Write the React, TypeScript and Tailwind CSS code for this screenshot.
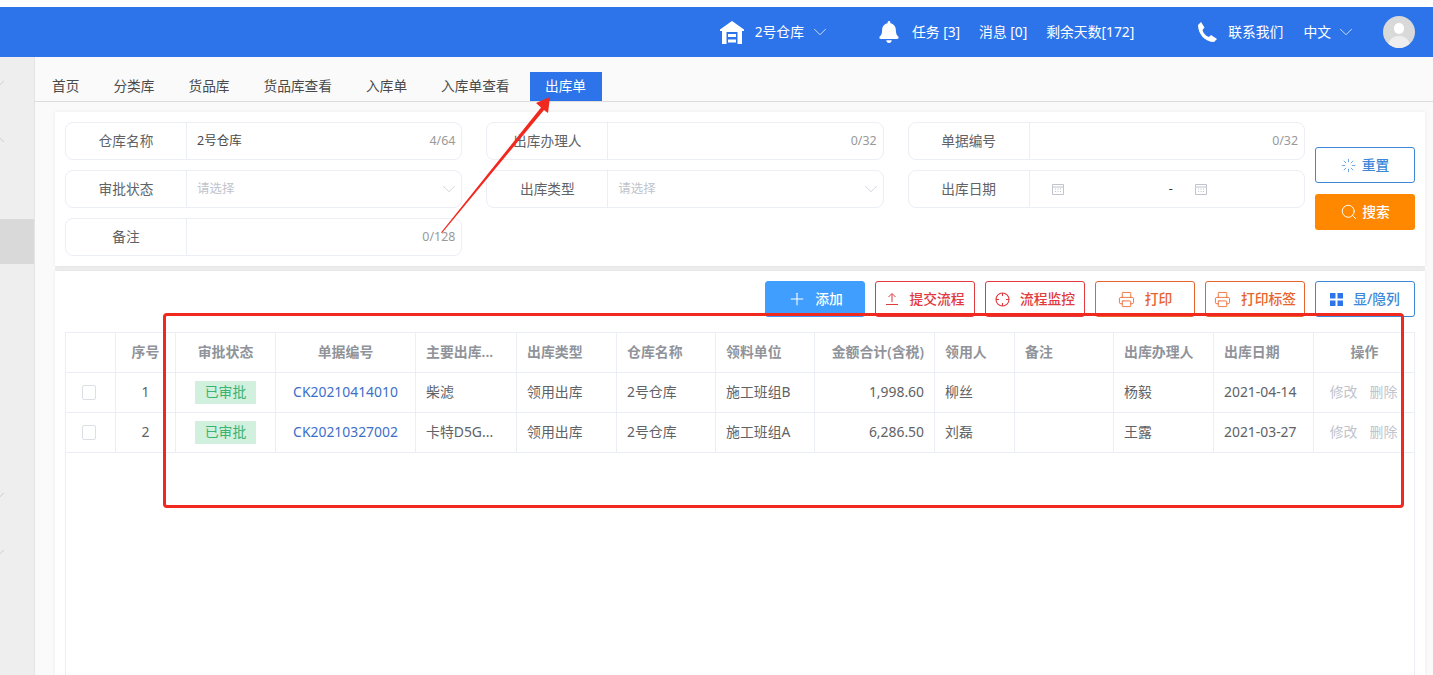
import type { ReactNode } from 'react'
import { ChevronDown, Plus, Printer, Search, Loader } from 'lucide-react'
import { FaBell } from 'react-icons/fa'

const COLS = 'grid grid-cols-[50px_60px_100px_140px_101px_100px_99px_99px_120px_80px_99px_100px_100px_101px]'

const TABS = ['首页', '分类库', '货品库', '货品库查看', '入库单', '入库单查看']

const HEADERS = [
  { label: '', cls: '' },
  { label: '序号', cls: 'justify-center' },
  { label: '审批状态', cls: 'justify-center' },
  { label: '单据编号', cls: 'justify-center' },
  { label: '主要出库...', cls: '' },
  { label: '出库类型', cls: '' },
  { label: '仓库名称', cls: '' },
  { label: '领料单位', cls: '' },
  { label: '金额合计(含税)', cls: 'justify-end' },
  { label: '领用人', cls: '' },
  { label: '备注', cls: '' },
  { label: '出库办理人', cls: '' },
  { label: '出库日期', cls: '' },
  { label: '操作', cls: 'justify-center' },
]

const ROWS = [
  { n: 1, code: 'CK20210414010', main: '柴滤', unit: '施工班组B', amount: '1,998.60', user: '柳丝', handler: '杨毅', date: '2021-04-14' },
  { n: 2, code: 'CK20210327002', main: '卡特D5G...', unit: '施工班组A', amount: '6,286.50', user: '刘磊', handler: '王露', date: '2021-03-27' },
]

function Warehouse() {
  return (
    <svg width="24" height="23" viewBox="0 0 24 23" fill="white">
      <path d="M12 0 24 8.500V10H22V23H2V10H0V8.500Z" />
      <path d="M6.500 11H17.500V23H6.500Z" fill="#2d74ea" />
      <path d="M8 13H16V16H8ZM8 18.500H16V21.500H8Z" />
    </svg>
  )
}

function Phone() {
  return (
    <svg width="20" height="20" viewBox="0 0 20 20" fill="white">
      <path d="M4 0 7.500 5.500 5.500 8C6 11 9 14 12 15L14 13 20 17 17 20C8 20 1 12 1 3Z" />
    </svg>
  )
}

function UploadIcon() {
  return (
    <svg width="14" height="14" viewBox="0 0 14 14" fill="none" stroke="currentColor" strokeWidth="1">
      <path d="M7 10V2M3.500 5 7 1.500 10.500 5M1 12.500H13" />
    </svg>
  )
}

function TargetIcon() {
  return (
    <svg width="15" height="15" viewBox="0 0 15 15" fill="none" stroke="currentColor" strokeWidth="1.100">
      <circle cx="7.500" cy="7.500" r="6.500" />
      <path d="M7.500 1V4M7.500 11V14M1 7.500H4M11 7.500H14" />
    </svg>
  )
}

function GridIcon() {
  return (
    <svg width="13" height="13" viewBox="0 0 13 13" fill="currentColor">
      <path d="M0 0H5.500V5.500H0ZM7.500 0H13V5.500H7.500ZM0 7.500H5.500V13H0ZM7.500 7.500H13V13H7.500Z" />
    </svg>
  )
}

function CalendarIcon() {
  return (
    <svg width="12" height="12" viewBox="0 0 12 12" fill="none" stroke="#c0c4cc" strokeWidth="1">
      <path d="M.5 1.500H11.500V11.500H.5ZM.5 4H11.500M3 6H4M5.500 6H6.500M8 6H9M3 8.500H4M5.500 8.500H6.500M8 8.500H9" />
    </svg>
  )
}

function Field({ label, children }: { label: string; children: ReactNode }) {
  return (
    <div className="flex h-[38px] rounded-lg border border-[#ebeef5] bg-white">
      <div className="flex w-[121px] shrink-0 items-center justify-center border-r border-[#ebeef5] text-[13.700px] text-[#606266]">
        {label}
      </div>
      <div className="flex flex-1 items-center justify-between pl-[10px] pr-[6px] text-[12.500px]">{children}</div>
    </div>
  )
}

function Counter({ children }: { children: ReactNode }) {
  return <span className="ml-auto text-[12.400px] text-[#999999]">{children}</span>
}

function SelectField({ label }: { label: string }) {
  return (
    <Field label={label}>
      <span className="text-[#c0c4cc]">请选择</span>
      <ChevronDown size={22} strokeWidth={0.8} className="-mr-[5px] text-[#c0c4cc]" />
    </Field>
  )
}

function ToolButton({ icon, label, cls }: { icon: ReactNode; label: string; cls: string }) {
  return (
    <button className={`flex h-9 w-[100px] items-center justify-center gap-[10px] rounded-[3px] border text-[13.800px] font-medium ${cls}`}>
      {icon}
      {label}
    </button>
  )
}

export default function App() {
  return (
    <div className="relative flex h-[675px] flex-col overflow-hidden bg-white font-['Noto_Sans','Noto_Sans_CJK_SC',sans-serif] text-[#606266]">
      {/* Top bar */}
      <header className="mt-[7px] flex h-[50px] shrink-0 items-center justify-end bg-[#2d74ea] pr-[18px] text-[13.800px] text-white">
        <Warehouse />
        <span className="ml-[11px]">2号仓库</span>
        <ChevronDown size={22} strokeWidth={0.8} className="ml-[5px]" />
        <FaBell size={22} className="ml-[47px]" />
        <span className="ml-[12px]">任务 [3]</span>
        <span className="ml-[19px]">消息 [0]</span>
        <span className="ml-[19px]">剩余天数[172]</span>
        <span className="ml-[63px]">
          <Phone />
        </span>
        <span className="ml-[11px]">联系我们</span>
        <span className="ml-[20px]">中文</span>
        <ChevronDown size={22} strokeWidth={0.8} className="ml-[4px]" />
        <div className="relative ml-[26px] h-8 w-8 overflow-hidden rounded-full bg-[#d9d9d9]">
          <div className="absolute left-[11px] top-[7px] h-[11px] w-[10px] rounded-full bg-white" />
          <div className="absolute left-[5px] top-[20px] h-[20px] w-[22px] rounded-full bg-[#eeeeee]" />
        </div>
      </header>

      <div className="flex min-h-0 flex-1">
        {/* Collapsed sidebar, mostly off screen */}
        <aside className="flex w-[35px] shrink-0 flex-col overflow-hidden border-r border-[#e4e4e4] bg-[#eeeeee] text-[#b5b5b5]">
          <ChevronDown size={14} strokeWidth={1} className="-ml-[7px] mt-[19px]" />
          <ChevronDown size={14} strokeWidth={1} className="-ml-[7px] mt-[43px] rotate-180" />
          <div className="mt-[72px] h-[45px] shrink-0 bg-[#d9d9d9]" />
          <ChevronDown size={14} strokeWidth={1} className="-ml-[7px] mt-[224px]" />
          <ChevronDown size={14} strokeWidth={1} className="-ml-[7px] mt-[43px]" />
        </aside>

        <main className="flex min-w-0 flex-1 flex-col bg-[#fafafa]">
          {/* Tabs */}
          <div className="flex h-[45px] shrink-0 items-end border-b border-[#dddddd] text-[13.700px] text-[#4a4a4a]">
            {TABS.map((t) => (
              <div key={t} className="flex h-[29px] items-center px-[17px]">
                {t}
              </div>
            ))}
            <div className="ml-[3px] flex h-[29px] w-[72px] items-center justify-center bg-[#2d74ea] text-white">出库单</div>
          </div>

          <div className="ml-5 mr-2 mt-[10px] flex min-h-0 flex-1 flex-col gap-[5px] bg-[#eeeeee]">
            {/* Search form */}
            <section className="flex shrink-0 bg-white p-[10px] shadow-[0_0_4px_rgba(0,0,0,0.06)]">
              <div className="grid w-[1240px] grid-cols-3 gap-x-6 gap-y-[10px]">
                <Field label="仓库名称">
                  <span className="text-[#4a4a4a]">2号仓库</span>
                  <Counter>4/64</Counter>
                </Field>
                <Field label="出库办理人">
                  <Counter>0/32</Counter>
                </Field>
                <Field label="单据编号">
                  <Counter>0/32</Counter>
                </Field>
                <SelectField label="审批状态" />
                <SelectField label="出库类型" />
                <Field label="出库日期">
                  <div className="flex flex-1 items-center pl-[12px] text-[#333333]">
                    <CalendarIcon />
                    <span className="ml-[105px]">-</span>
                    <span className="ml-[22px]">
                      <CalendarIcon />
                    </span>
                  </div>
                </Field>
                <Field label="备注">
                  <Counter>0/128</Counter>
                </Field>
              </div>
              <div className="ml-[10px] flex w-[100px] flex-col gap-[11px] pt-[25px]">
                <button className="flex h-9 items-center justify-center gap-[6px] rounded-[3px] border border-[#3d87d8] text-[13.800px] font-medium text-[#3d87d8]">
                  <Loader size={15} strokeWidth={1.200} />
                  重置
                </button>
                <button className="flex h-9 items-center justify-center gap-[4px] rounded-[3px] bg-[#ff8800] text-[13.800px] font-medium text-white">
                  <Search size={18} strokeWidth={1.300} />
                  搜索
                </button>
              </div>
            </section>

            {/* List */}
            <section className="flex min-h-0 flex-1 flex-col bg-white px-[10px] pt-[10px] shadow-[0_0_4px_rgba(0,0,0,0.06)]">
              <div className="flex shrink-0 justify-end gap-[10px]">
                <ToolButton icon={<Plus size={20} strokeWidth={1.300} className="-mr-[2px]" />} label="添加" cls="border-[#409eff] bg-[#409eff] text-white" />
                <ToolButton icon={<UploadIcon />} label="提交流程" cls="border-[#e0393e] text-[#e0393e]" />
                <ToolButton icon={<TargetIcon />} label="流程监控" cls="border-[#e0393e] text-[#e0393e]" />
                <ToolButton icon={<Printer size={17} strokeWidth={1.200} />} label="打印" cls="border-[#e8632c] text-[#e8632c]" />
                <ToolButton icon={<Printer size={17} strokeWidth={1.200} />} label="打印标签" cls="border-[#e8632c] text-[#e8632c]" />
                <ToolButton icon={<span className="text-[#2d74ea]"><GridIcon /></span>} label="显/隐列" cls="border-[#3d87d8] text-[#3d87d8]" />
              </div>

              <div className="mt-[15px] min-h-0 flex-1 border-x border-t border-[#ebeef5] text-[13.900px]">
                <div className={`${COLS} h-10 border-b border-[#ebeef5] font-semibold text-[#909399]`}>
                  {HEADERS.map((h, i) => (
                    <div key={i} className={`flex items-center whitespace-nowrap border-r border-[#ebeef5] px-[10px] last:border-r-0 ${h.cls}`}>
                      {h.label}
                    </div>
                  ))}
                </div>
                {ROWS.map((r) => (
                  <div key={r.n} className={`${COLS} h-10 border-b border-[#ebeef5]`}>
                    <div className="flex items-center justify-center border-r border-[#ebeef5] pr-[3px]">
                      <span className="h-[15px] w-[14px] rounded-[2px] border border-[#dcdfe6]" />
                    </div>
                    <div className="flex items-center justify-center border-r border-[#ebeef5]">{r.n}</div>
                    <div className="flex items-center justify-center border-r border-[#ebeef5]">
                      <span className="flex h-[23px] w-[61px] items-center justify-center bg-[#d1f0de] text-[#3cb371]">已审批</span>
                    </div>
                    <div className="flex items-center justify-center border-r border-[#ebeef5] text-[#3d6fc9]">{r.code}</div>
                    <div className="flex items-center border-r border-[#ebeef5] px-[10px]">{r.main}</div>
                    <div className="flex items-center border-r border-[#ebeef5] px-[10px]">领用出库</div>
                    <div className="flex items-center border-r border-[#ebeef5] px-[10px]">2号仓库</div>
                    <div className="flex items-center border-r border-[#ebeef5] px-[10px]">{r.unit}</div>
                    <div className="flex items-center justify-end border-r border-[#ebeef5] px-[10px]">{r.amount}</div>
                    <div className="flex items-center border-r border-[#ebeef5] px-[10px]">{r.user}</div>
                    <div className="border-r border-[#ebeef5]" />
                    <div className="flex items-center border-r border-[#ebeef5] px-[10px]">{r.handler}</div>
                    <div className="flex items-center border-r border-[#ebeef5] px-[10px]">{r.date}</div>
                    <div className="flex items-center justify-center gap-3 pr-[2px] text-[#c0c4cc]">
                      <span>修改</span>
                      <span>删除</span>
                    </div>
                  </div>
                ))}
              </div>
            </section>
          </div>
        </main>
      </div>

      {/* Red annotation drawn over the screenshot */}
      <div className="pointer-events-none absolute left-[163px] top-[313px] h-[195px] w-[1241px] rounded-[4px] border-[3px] border-[#f0281e]" />
      <svg className="pointer-events-none absolute left-0 top-0" width="1433" height="675" fill="#f0281e">
        <path d="M441 232.500 541 107.500 536 103 550 97 548 113 544 110 442 233Z" />
      </svg>
    </div>
  )
}
